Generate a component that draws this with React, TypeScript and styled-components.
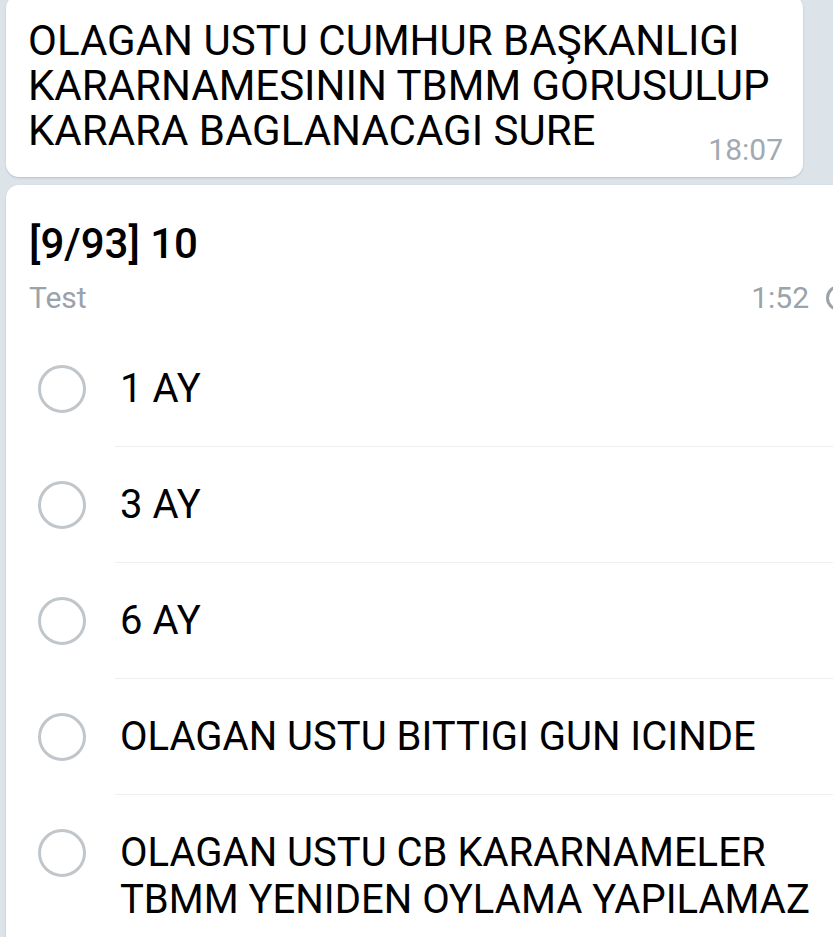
import styled, { createGlobalStyle } from "styled-components";

const GlobalStyle = createGlobalStyle`
  html, body {
    margin: 0;
    padding: 0;
    width: 833px;
    height: 937px;
    overflow: hidden;
    background: #dce3e9;
    font-family: Roboto, "Noto Sans", "Liberation Sans", sans-serif;
    -webkit-font-smoothing: antialiased;
  }
`;

const ChatColumn = styled.div`
  display: flex;
  flex-direction: column;
  gap: 8px;
  padding-left: 6px;
`;

const Bubble = styled.div<{ $wide?: boolean }>`
  box-sizing: border-box;
  background: #ffffff;
  border-radius: 13px;
  box-shadow: 0 1px 2px rgba(60, 80, 100, 0.22);
  width: ${(p) => (p.$wide ? "870px" : "797px")};
`;

const MessageBubble = styled(Bubble)`
  margin-top: -5px;
  padding: 23px 20px 12px 22px;
`;

const MessageText = styled.div`
  display: flow-root;
  font-size: 42px;
  line-height: 45px;
  color: #000;
`;

const Time = styled.span`
  float: right;
  margin-top: 27px;
  margin-left: 16px;
  font-size: 30px;
  line-height: 30px;
  color: #a1a9b1;
`;

const PollBubble = styled(Bubble)`
  padding: 35px 24px 0 23px;
`;

const PollTitle = styled.div`
  font-size: 42px;
  line-height: 47px;
  font-weight: 500;
  color: #000;
`;

const PollMeta = styled.div`
  display: flex;
  align-items: center;
  justify-content: space-between;
  margin-top: 13px;
  font-size: 30px;
  line-height: 36px;
  color: #9aa2aa;
`;

const MetaRight = styled.div`
  display: flex;
  align-items: center;
  gap: 17px;
`;

const OptionList = styled.ul`
  list-style: none;
  margin: 15px 0 0;
  padding: 0;
`;

const OptionRow = styled.li`
  display: flex;
  align-items: flex-start;
  gap: 29px;
  padding-left: 9px;
`;

const Radio = styled.span`
  flex: none;
  box-sizing: border-box;
  width: 48px;
  height: 48px;
  margin-top: 34px;
  border-radius: 50%;
  border: 3px solid #c1c6cb;
`;

const OptionText = styled.div`
  flex: 1;
  padding: 34px 0 34px 5px;
  font-size: 40px;
  line-height: 47px;
  color: #000;
  border-bottom: 1px solid #eceeef;
`;

const options = [
  "1 AY",
  "3 AY",
  "6 AY",
  "OLAGAN USTU BITTIGI GUN ICINDE",
  "OLAGAN USTU CB KARARNAMELER TBMM YENIDEN OYLAMA YAPILAMAZ",
];

function TimerIcon() {
  return (
    <svg width="26" height="26" viewBox="0 0 26 26">
      <circle cx="13" cy="13" r="11.5" fill="none" stroke="#9aa2aa" strokeWidth="3" />
    </svg>
  );
}

export default function App() {
  return (
    <>
      <GlobalStyle />
      <ChatColumn>
        <MessageBubble>
          <MessageText>
            OLAGAN USTU CUMHUR BAŞKANLIGI KARARNAMESININ TBMM GORUSULUP KARARA
            BAGLANACAGI SURE
            <Time>18:07</Time>
          </MessageText>
        </MessageBubble>
        <PollBubble $wide>
          <PollTitle>[9/93] 10</PollTitle>
          <PollMeta>
            <span>Test</span>
            <MetaRight>
              <span>1:52</span>
              <TimerIcon />
            </MetaRight>
          </PollMeta>
          <OptionList>
            {options.map((o, i) => (
              <OptionRow key={"opt" + i}>
                <Radio />
                <OptionText>{o}</OptionText>
              </OptionRow>
            ))}
          </OptionList>
        </PollBubble>
      </ChatColumn>
    </>
  );
}
